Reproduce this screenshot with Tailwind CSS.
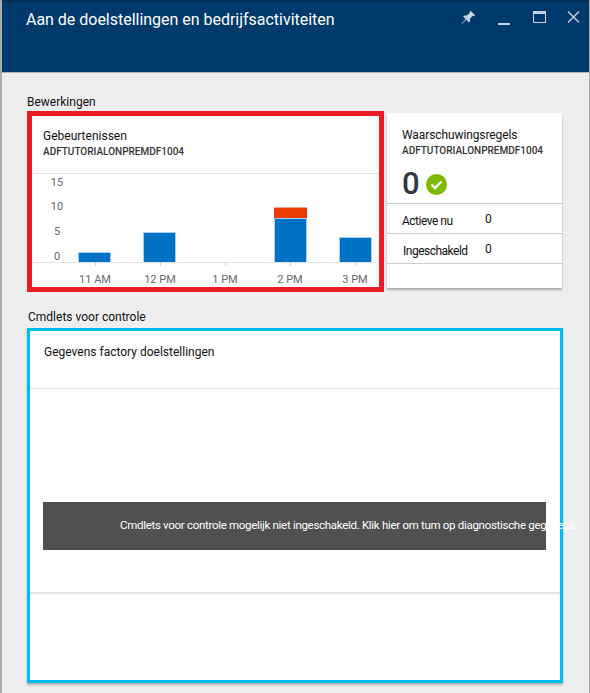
<!DOCTYPE html>
<html lang="en">
<head>
    <meta charset="UTF-8">
    <title>Aan de doelstellingen en bedrijfsactiviteiten</title>
    <script src="https://cdn.jsdelivr.net/npm/@tailwindcss/browser@4"></script>
</head>
<body class="bg-[#eeeeee]">
    <div class="w-[590px] h-[693px] overflow-hidden bg-[#eeeeee] border-l-2 border-r border-[#adadad] font-['Roboto',sans-serif] text-[12px] text-[#111]">
        <!-- blade header -->
        <header class="h-[73px] bg-[#003a6c] border-t-2 border-t-[#002f58] border-b border-b-[#b5b5b5] pl-[24px] pr-[8px] flex justify-between items-start">
            <h1 class="text-[16px] leading-[24px] mt-[6px] tracking-[-0.02px] text-white">Aan de doelstellingen en bedrijfsactiviteiten</h1>
            <div class="flex items-center gap-[20px] mt-[8px] text-[#c5d3e0]">
                <svg class="w-[15px] h-[15px]" viewBox="0 0 15 15" fill="currentColor"><path d="M9.5 0.8 14.2 5.2 13 6.2 11.8 5.8 9 8.8 9 11.6 7.9 12.4 5.2 9.6 1 14 0.6 13.6 4.6 9 2.2 6.6 3 5.6 5.8 5.6 8.8 2.8 8.6 1.8Z"/></svg>
                <svg class="w-[15px] h-[15px]" viewBox="0 0 15 15" fill="currentColor"><rect x="2" y="13" width="12" height="2"/></svg>
                <svg class="w-[15px] h-[15px]" viewBox="0 0 15 15" fill="none" stroke="currentColor"><rect x="2.5" y="1.5" width="12" height="11"/><rect x="2" y="1" width="13" height="3" fill="currentColor" stroke="none"/></svg>
                <svg class="w-[15px] h-[15px]" viewBox="0 0 15 15" fill="none" stroke="currentColor" stroke-width="1.4"><path d="M2 1.5 13 12.5M13 1.5 2 12.5"/></svg>
            </div>
        </header>

        <main class="pl-[25px]">
            <p class="mt-[22px] leading-[15px]">Bewerkingen</p>

            <div class="flex items-start mt-[1px]">
                <!-- events chart -->
                <section class="w-[357px] h-[181px] border-[5px] border-[#ed1c24] bg-white">
                    <div class="pl-[11px] pt-[13px] h-[58px] border-b border-[#e3e3e3]">
                        <h2 class="leading-[15px]">Gebeurtenissen</h2>
                        <p class="text-[10px] font-medium leading-[15px] text-[#333]">ADFTUTORIALONPREMDF1004</p>
                    </div>
                    <svg class="block" width="347" height="118" viewBox="32 174 347 118" font-size="11" fill="#666" text-anchor="middle" font-family="Roboto, sans-serif">
                        <text x="57" y="186">15</text>
                        <text x="57" y="210">10</text>
                        <text x="57" y="235">5</text>
                        <text x="57" y="260">0</text>
                        <g stroke="#a8d0ee" fill="#0072c6">
                            <rect x="78.5" y="252.5" width="32" height="10"/>
                            <rect x="143.5" y="232.5" width="32" height="30"/>
                            <rect x="274.5" y="218.5" width="32" height="44"/>
                            <rect x="339.5" y="237.5" width="32" height="25"/>
                        </g>
                        <rect x="274" y="207" width="33" height="11" fill="#eb3c00"/>
                        <rect x="274" y="207" width="33" height="1" fill="#f5a58a"/>
                        <rect x="32" y="262" width="347" height="1" fill="#e3e3e3"/>
                        <g fill="#d0d0d0">
                            <rect x="95" y="262" width="1" height="4"/>
                            <rect x="160" y="262" width="1" height="4"/>
                            <rect x="225" y="262" width="1" height="4"/>
                            <rect x="290" y="262" width="1" height="4"/>
                            <rect x="355" y="262" width="1" height="4"/>
                        </g>
                        <text x="95" y="283">11 AM</text>
                        <text x="160" y="283">12 PM</text>
                        <text x="225" y="283">1 PM</text>
                        <text x="290" y="283">2 PM</text>
                        <text x="355" y="283">3 PM</text>
                    </svg>
                </section>

                <!-- alert rules -->
                <section class="w-[175px] h-[175px] ml-[3px] mt-[2px] bg-white shadow-[0_2px_2px_rgba(0,0,0,0.3)]">
                    <div class="h-[91px] border-b border-[#cccccc] pl-[15px] pt-[15px]">
                        <h2 class="leading-[15px] tracking-[-0.1px]">Waarschuwingsregels</h2>
                        <p class="text-[10px] font-medium leading-[15px] text-[#333]">ADFTUTORIALONPREMDF1004</p>
                        <div class="flex items-center gap-[6px] mt-[8px]">
                            <span class="text-[31px] leading-[36px] font-medium text-[#32383f]">0</span>
                            <svg class="w-[21px] h-[21px]" viewBox="0 0 21 21"><circle cx="10.5" cy="10.5" r="10.5" fill="#7fba00"/><path d="M5.5 10.5 9 14 15.5 7.5" fill="none" stroke="#fff" stroke-width="2.4"/></svg>
                        </div>
                    </div>
                    <div class="h-[30px] border-b border-[#cccccc] pl-[15px] pt-[4px] flex items-center">
                        <span class="w-[83px] tracking-[-0.5px]">Actieve nu</span><span class="mb-[3px]">0</span>
                    </div>
                    <div class="h-[30px] border-b border-[#cccccc] pl-[16px] pt-[4px] flex items-center">
                        <span class="w-[82px] tracking-[-0.5px]">Ingeschakeld</span><span class="mb-[3px]">0</span>
                    </div>
                </section>
            </div>

            <p class="mt-[18px] leading-[15px] pl-[1px]">Cmdlets voor controle</p>

            <!-- cmdlets panel -->
            <section class="w-[536px] h-[355px] mt-[3px] border-[3px] border-[#00bcf2] bg-white shadow-[0_2px_2px_rgba(0,0,0,0.25)]">
                <div class="h-[58px] border-b border-[#e3e3e3] pl-[14px] pt-[13px] leading-[16px]">Gegevens factory doelstellingen</div>
                <div class="h-[205px] border-b-2 border-[#e3e3e3] pl-[13px] pt-[113px]">
                    <div class="w-[503px] h-[48px] bg-[#505050] pl-[77px] flex items-center whitespace-nowrap text-[11.5px] tracking-[-0.3px] text-white">Cmdlets voor controle mogelijk niet ingeschakeld. Klik hier om tum op diagnostische gegevens.</div>
                </div>
            </section>
        </main>
    </div>
</body>
</html>
